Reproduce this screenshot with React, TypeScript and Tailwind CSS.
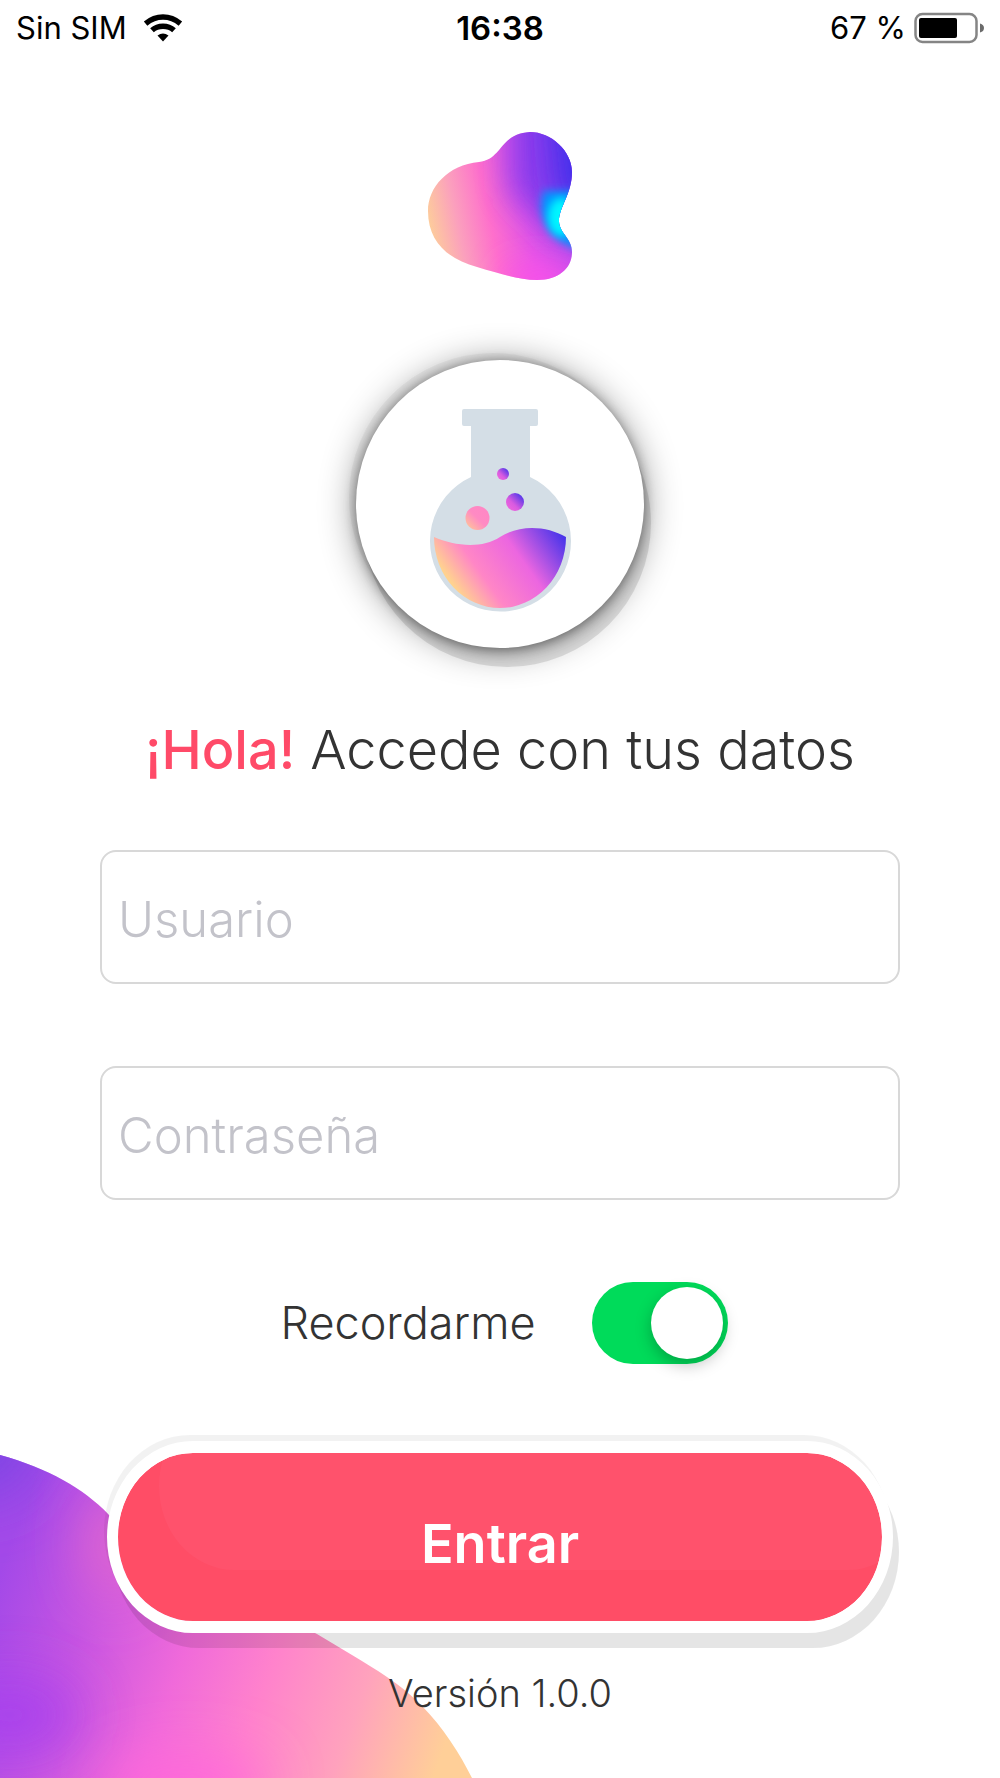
// App.tsx
import React, { useState } from 'react';

const StatusBar: React.FC = () => (
  <header className="grid grid-cols-3 items-center px-4 pt-2 text-[31px] leading-10 text-black">
    <div className="flex items-center gap-4">
      <span>Sin SIM</span>
      <svg className="h-7 w-10" viewBox="0 0 40 28" aria-label="Wi-Fi">
        <g fill="none" stroke="#000" strokeWidth="5.5">
          <path d="M2.6 9.6Q10.500 3 20 3T37.400 9.600" />
          <path d="M9 16.300Q13.500 12.300 20 12.300T31 16.300" />
        </g>
        <path d="M14.500 21.600Q20 17.500 25.500 21.600L20 27.500Z" fill="#000" />
      </svg>
    </div>
    <span className="text-center text-[33px] font-semibold">16:38</span>
    <div className="flex items-center justify-end gap-2">
      <span>67 %</span>
      <svg className="h-8 w-[70px]" viewBox="0 0 70 32" aria-label="Batería">
        <rect x="1.500" y="2" width="61" height="28" rx="7" fill="none" stroke="#858585" strokeWidth="2.500" />
        <rect x="5" y="6" width="38" height="20" rx="2" fill="#000" />
        <path d="M66 11.500Q70 12.500 70 16T66 20.500Z" fill="#6b6b6b" />
      </svg>
    </div>
  </header>
);

const Logo: React.FC = () => (
  <svg className="h-[148px] w-[144px]" viewBox="427 132 144 148" role="img" aria-label="Logo">
    <defs>
      <linearGradient id="logoBase" x1="427" y1="225" x2="571" y2="195" gradientUnits="userSpaceOnUse">
        <stop offset="0" stopColor="#fdce9a" />
        <stop offset=".2" stopColor="#fba0bd" />
        <stop offset=".42" stopColor="#fe6fcc" />
        <stop offset=".66" stopColor="#e456e6" />
        <stop offset="1" stopColor="#b04af0" />
      </linearGradient>
      <clipPath id="logoShape">
        <path d="M529 132C550 132 571 151 571 172C571 194 558 207 558 221C558 233 571 238 571 252C571 268 558 280 536 280C518 280 500 274 476 267C447 259 427 242 427 211C427 187 447 165 478 162C502 159 498 134 529 132Z" />
      </clipPath>
      <filter id="logoSoft" x="-100%" y="-100%" width="300%" height="300%">
        <feGaussianBlur stdDeviation="16" />
      </filter>
      <filter id="logoGlow" x="-100%" y="-100%" width="300%" height="300%">
        <feGaussianBlur stdDeviation="4" />
      </filter>
    </defs>
    <g clipPath="url(#logoShape)">
      <rect x="427" y="132" width="144" height="148" fill="url(#logoBase)" />
      <path d="M508 90H630V240H560C545 222 520 205 508 190Z" fill="#7a38ec" opacity=".85" filter="url(#logoSoft)" />
      <path d="M550 90H640V205H562Z" fill="#3a2eec" filter="url(#logoSoft)" />
      <ellipse cx="540" cy="280" rx="40" ry="16" fill="#fb50ea" filter="url(#logoSoft)" />
      <path d="M542 191H582V250C556 246 540 226 540 204Z" fill="#0094ff" filter="url(#logoGlow)" />
      <ellipse cx="560" cy="217" rx="13" ry="19" fill="#00f6ff" filter="url(#logoGlow)" />
    </g>
  </svg>
);

const Flask: React.FC = () => (
  <svg className="h-[204px] w-[142px]" viewBox="429 408 142 204" role="img" aria-label="Matraz">
    <defs>
      <linearGradient id="liquid" x1="454" y1="586" x2="550" y2="518" gradientUnits="userSpaceOnUse">
        <stop offset="0" stopColor="#ffd28f" />
        <stop offset=".25" stopColor="#ff86c6" />
        <stop offset=".6" stopColor="#ec66e0" />
        <stop offset="1" stopColor="#4a35ea" />
      </linearGradient>
      <linearGradient id="bubbleLeft" x1="0" y1="1" x2="1" y2="0">
        <stop offset="0" stopColor="#ffce92" />
        <stop offset=".5" stopColor="#ff8ac3" />
        <stop offset="1" stopColor="#ff86c6" />
      </linearGradient>
      <linearGradient id="bubbleRight" x1="0" y1="1" x2="1" y2="0">
        <stop offset=".1" stopColor="#ee66de" />
        <stop offset=".4" stopColor="#d95be0" />
        <stop offset=".9" stopColor="#4a35ea" />
      </linearGradient>
    </defs>
    <path
      d="M464 409H536Q538 409 538 411V424Q538 426 536 426H530V477A70.500 70.500 0 1 1 471 477V426H464Q462 426 462 424V411Q462 409 464 409Z"
      fill="#d4dee6"
    />
    <path d="M434 537C454 546 482 549 500 537C520 524 547 526 566 537A66 71 0 0 1 434 537Z" fill="url(#liquid)" />
    <circle cx="477.500" cy="518" r="12" fill="url(#bubbleLeft)" />
    <circle cx="515" cy="502" r="9" fill="url(#bubbleRight)" />
    <circle cx="503" cy="474" r="6" fill="url(#bubbleRight)" />
  </svg>
);

const CornerBlob: React.FC = () => (
  <svg className="absolute bottom-0 left-0 h-[328px] w-[480px]" viewBox="0 1450 480 328" aria-hidden="true">
    <defs>
      <linearGradient id="cornerBase" x1="-10" y1="1600" x2="440" y2="1760" gradientUnits="userSpaceOnUse">
        <stop offset="0" stopColor="#a349e8" />
        <stop offset=".2" stopColor="#c655e2" />
        <stop offset=".42" stopColor="#f06ada" />
        <stop offset=".6" stopColor="#ff82cc" />
        <stop offset=".8" stopColor="#ffa2bd" />
        <stop offset="1" stopColor="#ffcf98" />
      </linearGradient>
      <clipPath id="cornerShape">
        <path d="M0 1455C48 1468 84 1489 108 1514C150 1562 190 1590 240 1604C270 1612 293 1622 317 1634L352 1655C375 1669 400 1683 422 1706C443 1727 460 1754 472 1778H0Z" />
      </clipPath>
      <filter id="cornerSoft" x="-200%" y="-200%" width="500%" height="500%">
        <feGaussianBlur stdDeviation="28" />
      </filter>
    </defs>
    <g clipPath="url(#cornerShape)">
      <rect y="1450" width="480" height="328" fill="url(#cornerBase)" />
      <ellipse cx="-20" cy="1440" rx="60" ry="60" fill="#7f45e4" filter="url(#cornerSoft)" />
      <ellipse cx="112" cy="1545" rx="22" ry="55" fill="#e86cc8" filter="url(#cornerSoft)" />
      <ellipse cx="10" cy="1715" rx="70" ry="40" fill="#a640ee" opacity=".85" filter="url(#cornerSoft)" />
      <ellipse cx="185" cy="1785" rx="80" ry="30" fill="#ff66dc" filter="url(#cornerSoft)" />
    </g>
  </svg>
);

interface TextFieldProps {
  id: string;
  label: string;
  type: 'text' | 'password';
  value: string;
  onChange: (value: string) => void;
}

const TextField: React.FC<TextFieldProps> = ({ id, label, type, value, onChange }) => (
  <input
    id={id}
    type={type}
    value={value}
    placeholder={label}
    aria-label={label}
    onChange={(e) => onChange(e.target.value)}
    className="h-[134px] w-full rounded-2xl border-2 border-[#d8d8d8] bg-white px-4 pt-1 text-[49px] font-light text-[#333] placeholder:text-[#c3c3ca] focus:outline-none"
  />
);

const App: React.FC = () => {
  const [user, setUser] = useState('');
  const [password, setPassword] = useState('');
  const [remember, setRemember] = useState(true);

  const handleSubmit = (event: React.FormEvent<HTMLFormElement>) => {
    event.preventDefault();
  };

  return (
    <div className="relative min-h-screen overflow-hidden bg-white font-['Inter',sans-serif] text-[#333]">
      <CornerBlob />
      <div className="relative">
        <StatusBar />
        <main className="flex flex-col items-center pt-[84px]">
          <Logo />
          <div className="mt-20 flex size-72 items-center justify-center rounded-full bg-white pt-3 shadow-[0_2px_12px_rgba(0,0,0,0.4),0_2px_36px_rgba(0,0,0,0.45),7px_19px_0_rgba(0,0,0,0.11),-7px_-7px_0_rgba(0,0,0,0.04)]">
            <Flask />
          </div>
          <h1 className="mt-[70px] text-center text-[54px] leading-16 font-light">
            <span className="font-medium text-[#ff4a68]">¡Hola!</span> Accede con tus datos
          </h1>
          <form onSubmit={handleSubmit} className="mt-[68px] flex w-4/5 flex-col">
            <div className="flex flex-col gap-[82px]">
              <TextField id="user" label="Usuario" type="text" value={user} onChange={setUser} />
              <TextField id="password" label="Contraseña" type="password" value={password} onChange={setPassword} />
            </div>
            <label className="mt-[82px] flex items-center justify-center gap-14 pl-2 text-[45px] font-light">
              <span>Recordarme</span>
              <input
                type="checkbox"
                role="switch"
                checked={remember}
                onChange={(e) => setRemember(e.target.checked)}
                className="flex h-[82px] w-[136px] appearance-none items-center rounded-full bg-[#ddd] px-[5px] before:size-[72px] before:rounded-full before:bg-white before:shadow-[0_6px_16px_rgba(0,0,0,0.25)] checked:justify-end checked:bg-[#00db5a]"
              />
            </label>
            <button
              type="submit"
              className="mx-[7px] mt-[77px] h-48 rounded-[86px/96px] border-x-[11px] border-y-[12px] border-white bg-[#ff526c] bg-clip-padding pt-3 text-[54px] font-semibold text-white shadow-[inset_41px_-51px_0_#ff4d66,6px_15px_0_rgba(0,0,0,0.1),-3px_-6px_0_rgba(0,0,0,0.05)]"
            >
              Entrar
            </button>
          </form>
          <p className="mt-9 text-[38px] leading-12 font-light">Versión 1.0.0</p>
        </main>
      </div>
    </div>
  );
};

export default App;
